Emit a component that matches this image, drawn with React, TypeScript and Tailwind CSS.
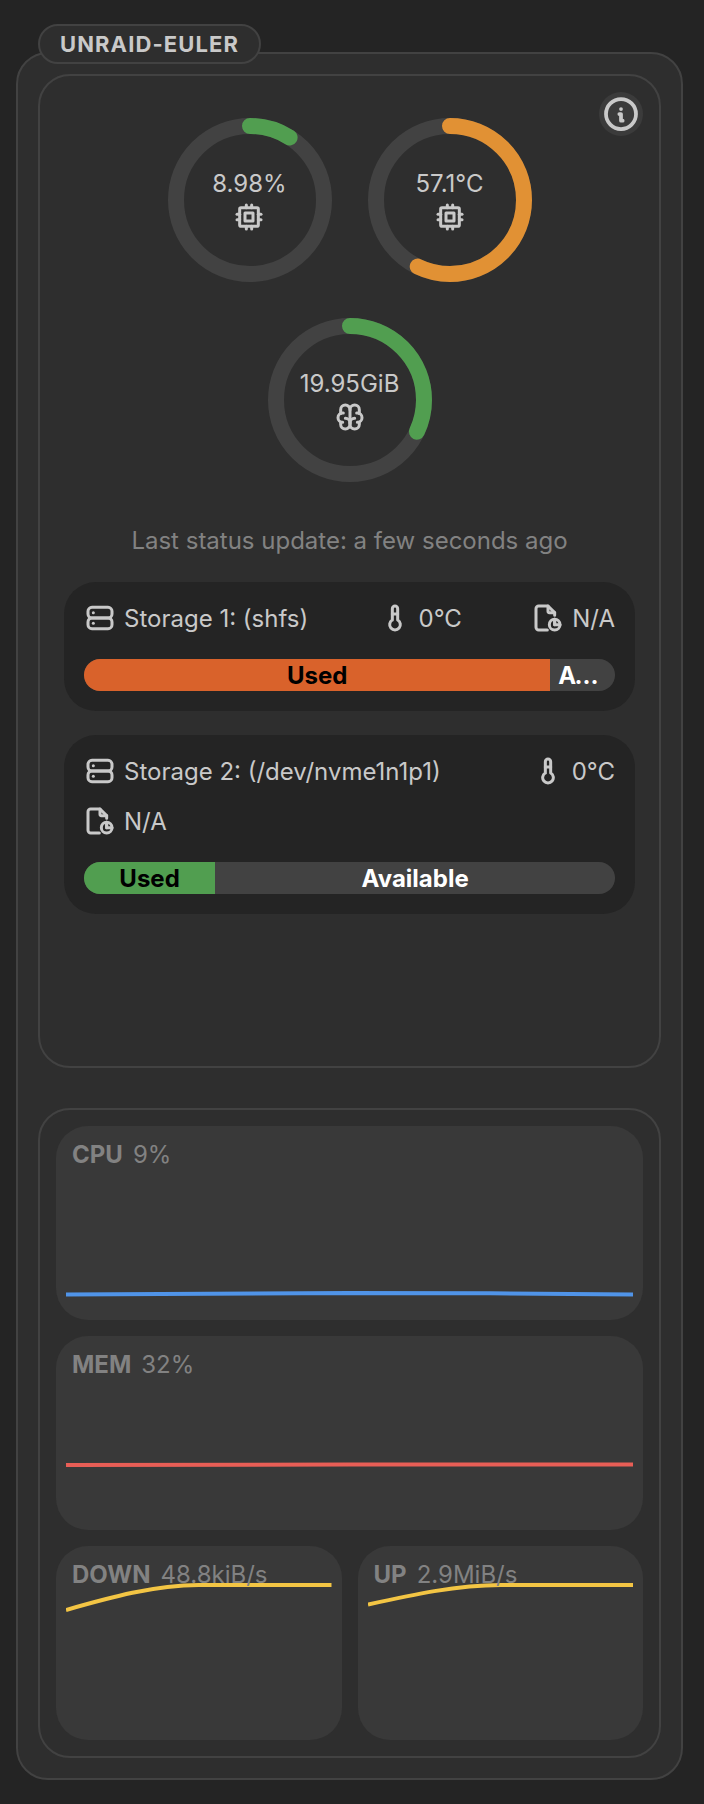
import type { ReactNode } from 'react';
import { TbBrain, TbCpu, TbFileReport, TbInfoCircle, TbServer, TbTemperature } from 'react-icons/tb';

const RING_RADIUS = 74;
const RING_LENGTH = 2 * Math.PI * RING_RADIUS;

type RingProps = {
  value: number;
  label: string;
  color: string;
  children: ReactNode;
};

function Ring({ value, label, color, children }: RingProps) {
  return (
    <div className="grid size-[200px] place-items-center">
      <svg viewBox="0 0 200 200" className="col-start-1 row-start-1 size-[200px] -rotate-90" fill="none" strokeWidth="16">
        <circle cx="100" cy="100" r={RING_RADIUS} className="stroke-[#424242]" />
        <circle
          cx="100"
          cy="100"
          r={RING_RADIUS}
          className={color}
          strokeLinecap="round"
          strokeDasharray={`${(value / 100) * RING_LENGTH} ${RING_LENGTH}`}
        />
      </svg>
      <div className="col-start-1 row-start-1 flex flex-col items-center">
        <span>{label}</span>
        {children}
      </div>
    </div>
  );
}

type StorageProps = {
  name: string;
  used: number;
  color: string;
};

function Storage({ name, used, color }: StorageProps) {
  return (
    <section className="rounded-[32px] bg-[#242424] p-5">
      <div className="flex flex-wrap justify-between gap-4">
        <div className="flex gap-2">
          <TbServer className="size-8 stroke-[2.25]" />
          <span>{name}</span>
        </div>
        <div className="flex gap-2">
          <TbTemperature className="size-8 stroke-[2.25]" />
          <span>0°C</span>
        </div>
        <div className="flex gap-2">
          <TbFileReport className="size-8 stroke-[2.25]" />
          <span>N/A</span>
        </div>
      </div>
      <div className="mt-[23px] flex h-8 overflow-hidden rounded-full bg-[#424242] text-center font-bold">
        <div className={`truncate px-2 text-black ${color}`} style={{ width: `${used}%` }}>
          Used
        </div>
        <div className="min-w-0 flex-1 truncate px-2 text-white">Available</div>
      </div>
    </section>
  );
}

type GraphProps = {
  title: string;
  value: string;
  width: number;
  path: string;
  color: string;
  className?: string;
};

function Graph({ title, value, width, path, color, className = '' }: GraphProps) {
  return (
    <div className={`relative h-[194px] rounded-[32px] bg-[#393939] px-4 py-3 ${className}`}>
      <div className="absolute inset-x-2.5 inset-y-0">
        <svg viewBox={`0 0 ${width} 194`} preserveAspectRatio="none" className="size-full" fill="none">
          <path d={path} className={color} strokeWidth="4" vectorEffect="non-scaling-stroke" />
        </svg>
      </div>
      <div className="relative flex gap-2.5 text-[#828282]">
        <span className="font-bold">{title}</span>
        <span>{value}</span>
      </div>
    </div>
  );
}

export default function App() {
  return (
    <main className="min-h-screen bg-[#242424] pt-6 pr-[21px] pb-6 pl-4 font-['Inter',sans-serif] text-[24px] leading-[34px] text-[#c9c9c9]">
      <h1 className="relative z-10 -mb-3 ml-[22px] flex h-10 w-fit items-center rounded-full border-2 border-[#424242] bg-[#2e2e2e] px-5 text-[22px] font-bold tracking-wider uppercase">
        unraid-euler
      </h1>
      <div className="flex flex-col gap-10 rounded-[32px] border-2 border-[#424242] bg-[#2e2e2e] p-5">
        <div className="relative flex min-h-[994px] flex-col gap-6 rounded-[32px] border-2 border-[#424242] p-6">
          <button
            type="button"
            aria-label="System information"
            className="absolute top-4 right-4 flex size-11 items-center justify-center rounded-full bg-[#3b3b3b]"
          >
            <TbInfoCircle className="size-10 stroke-[2.25]" />
          </button>
          <div className="flex flex-wrap justify-center">
            <Ring value={8.98} label="8.98%" color="stroke-[#519e50]">
              <TbCpu className="size-8 stroke-[2.25]" />
            </Ring>
            <Ring value={57.1} label="57.1°C" color="stroke-[#e19134]">
              <TbCpu className="size-8 stroke-[2.25]" />
            </Ring>
            <Ring value={32} label="19.95GiB" color="stroke-[#519e50]">
              <TbBrain className="size-8 stroke-[2.25]" />
            </Ring>
          </div>
          <p className="text-center text-[#828282]">Last status update: a few seconds ago</p>
          <Storage name="Storage 1: (shfs)" used={87.8} color="bg-[#d9622b]" />
          <Storage name="Storage 2: (/dev/nvme1n1p1)" used={24.7} color="bg-[#519e50]" />
        </div>
        <div className="grid grid-cols-2 gap-4 rounded-[32px] border-2 border-[#424242] p-4">
          <Graph
            title="CPU"
            value="9%"
            width={567}
            path="M0 168.5 C95 167.5 189 167 283 167 C378 167 472 167.5 567 168.5"
            color="stroke-[#5094e8]"
            className="col-span-2"
          />
          <Graph
            title="MEM"
            value="32%"
            width={567}
            path="M0 129 C95 128.8 189 128.7 283 128.6 L567 128.4"
            color="stroke-[#e85e56]"
            className="col-span-2"
          />
          <Graph
            title="DOWN"
            value="48.8kiB/s"
            width={266}
            path="M0 64 C44 51.5 89 39 133 39 L266 39"
            color="stroke-[#f3c544]"
          />
          <Graph
            title="UP"
            value="2.9MiB/s"
            width={266}
            path="M0 58.5 C44 48.8 89 39 133 39 L266 39"
            color="stroke-[#f3c544]"
          />
        </div>
      </div>
    </main>
  );
}
